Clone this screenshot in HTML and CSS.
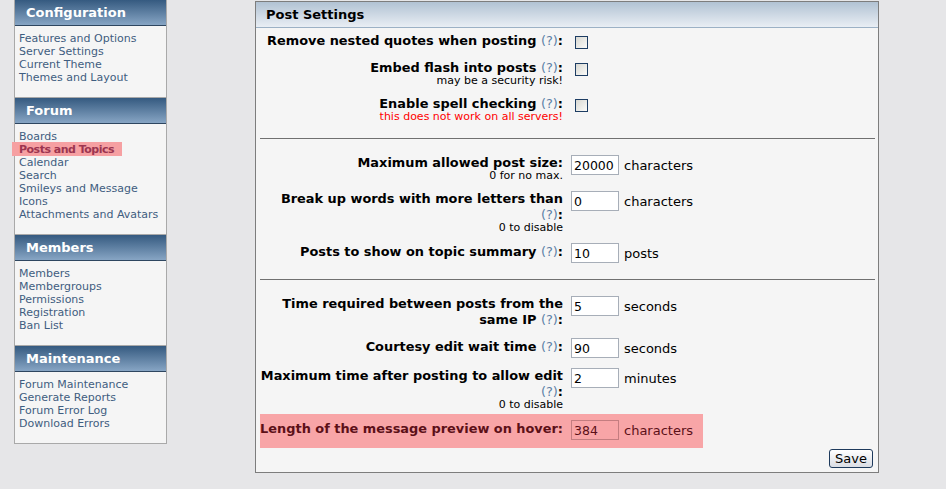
FILE: index.html
```html
<!DOCTYPE html>
<html lang="en">
<head>
<meta charset="utf-8">
<title>Post Settings</title>
<link rel="stylesheet" href="styles.css">
</head>
<body>
<div class="page">
  <nav class="nav">
    <section class="nav-section">
      <h3 class="nav-head">Configuration</h3>
      <ul class="nav-list">
        <li><a href="#">Features and Options</a></li>
        <li><a href="#">Server Settings</a></li>
        <li><a href="#">Current Theme</a></li>
        <li><a href="#">Themes and Layout</a></li>
      </ul>
    </section>
    <section class="nav-section">
      <h3 class="nav-head">Forum</h3>
      <ul class="nav-list">
        <li><a href="#">Boards</a></li>
        <li><a href="#" class="active">Posts and Topics</a></li>
        <li><a href="#">Calendar</a></li>
        <li><a href="#">Search</a></li>
        <li><a href="#">Smileys and Message</a></li>
        <li><a href="#">Icons</a></li>
        <li><a href="#">Attachments and Avatars</a></li>
      </ul>
    </section>
    <section class="nav-section">
      <h3 class="nav-head">Members</h3>
      <ul class="nav-list">
        <li><a href="#">Members</a></li>
        <li><a href="#">Membergroups</a></li>
        <li><a href="#">Permissions</a></li>
        <li><a href="#">Registration</a></li>
        <li><a href="#">Ban List</a></li>
      </ul>
    </section>
    <section class="nav-section">
      <h3 class="nav-head">Maintenance</h3>
      <ul class="nav-list">
        <li><a href="#">Forum Maintenance</a></li>
        <li><a href="#">Generate Reports</a></li>
        <li><a href="#">Forum Error Log</a></li>
        <li><a href="#">Download Errors</a></li>
      </ul>
    </section>
  </nav>

  <main class="panel">
    <h3 class="panel-head">Post Settings</h3>
    <form class="panel-body">
      <div class="row">
        <div class="label">Remove nested quotes when posting <a href="#" class="help">(?)</a>:</div>
        <div class="field"><input type="checkbox" class="check"></div>
      </div>
      <div class="row">
        <div class="label">Embed flash into posts <a href="#" class="help">(?)</a>:<span class="note">may be a security risk!</span></div>
        <div class="field"><input type="checkbox" class="check"></div>
      </div>
      <div class="row">
        <div class="label">Enable spell checking <a href="#" class="help">(?)</a>:<span class="note warn">this does not work on all servers!</span></div>
        <div class="field"><input type="checkbox" class="check"></div>
      </div>

      <hr class="sep">

      <div class="row">
        <div class="label">Maximum allowed post size:<span class="note">0 for no max.</span></div>
        <div class="field"><input type="text" class="num" value="20000"><span class="unit">characters</span></div>
      </div>
      <div class="row">
        <div class="label">Break up words with more letters than <a href="#" class="help">(?)</a>:<span class="note">0 to disable</span></div>
        <div class="field"><input type="text" class="num" value="0"><span class="unit">characters</span></div>
      </div>
      <div class="row single">
        <div class="label">Posts to show on topic summary <a href="#" class="help">(?)</a>:</div>
        <div class="field"><input type="text" class="num" value="10"><span class="unit">posts</span></div>
      </div>

      <hr class="sep">

      <div class="row">
        <div class="label">Time required between posts from the same IP <a href="#" class="help">(?)</a>:</div>
        <div class="field"><input type="text" class="num" value="5"><span class="unit">seconds</span></div>
      </div>
      <div class="row single">
        <div class="label">Courtesy edit wait time <a href="#" class="help">(?)</a>:</div>
        <div class="field"><input type="text" class="num" value="90"><span class="unit">seconds</span></div>
      </div>
      <div class="row">
        <div class="label">Maximum time after posting to allow edit <a href="#" class="help">(?)</a>:<span class="note">0 to disable</span></div>
        <div class="field"><input type="text" class="num" value="2"><span class="unit">minutes</span></div>
      </div>
      <div class="row single marked">
        <div class="label">Length of the message preview on hover:</div>
        <div class="field"><input type="text" class="num" value="384"><span class="unit">characters</span></div>
      </div>

      <div class="actions"><button type="button" class="save">Save</button></div>
    </form>
  </main>
</div>
</body>
</html>
```

FILE: styles.css
```css
* { box-sizing: border-box; }

html, body {
  margin: 0;
  padding: 0;
  background: #e6e6e8;
  font-family: "DejaVu Sans", Verdana, sans-serif;
  color: #000;
}

.page {
  display: flex;
  align-items: flex-start;
  gap: 88px;
  padding-left: 14px;
}

/* ---------- sidebar ---------- */
.nav {
  width: 153px;
  border: 1px solid #a9a9a9;
  border-top: 0;
  background: #f5f5f5;
}

.nav-section + .nav-section {
  border-top: 1px solid #a9a9a9;
}

.nav-head {
  margin: 0;
  height: 26px;
  padding-left: 11px;
  background: linear-gradient(#355a80, #87a5c4);
  border-bottom: 1px solid #2e4660;
  color: #fff;
  font-size: 13px;
  font-weight: bold;
  line-height: 25px;
}

.nav-list {
  list-style: none;
  margin: 0;
  padding: 6px 0 13px 4px;
  font-size: 11px;
  line-height: 13px;
}

.nav-list a {
  color: #3f5d80;
  text-decoration: none;
}

.nav-list a.active {
  display: inline-block;
  margin: -1px 0 0 -7px;
  padding: 1px 8px 0 7px;
  background: #f6a0a2;
  color: #9c3550;
  font-weight: bold;
  letter-spacing: -0.5px;
}

/* ---------- main panel ---------- */
.panel {
  width: 624px;
  margin-top: 1px;
  border: 1px solid #7d7d7d;
  background: #f5f5f5;
}

.panel-head {
  margin: 0;
  height: 26px;
  padding-left: 10px;
  background: linear-gradient(#b1c2d3, #e9eef4);
  border-bottom: 1px solid #9cb1c5;
  font-size: 13px;
  font-weight: bold;
  line-height: 25px;
}

.panel-body {
  margin: 0;
  padding: 5px 0 4px 4px;
}

.row {
  display: grid;
  grid-template-columns: 303px auto;
  column-gap: 8px;
  align-items: start;
  margin-bottom: 10px;
}

.label {
  text-align: right;
  font-size: 12.9px;
  font-weight: bold;
  line-height: 16px;
}

.row.single .label {
  padding-top: 1px;
}

.help {
  color: #5b7fa6;
  font-weight: normal;
  text-decoration: none;
}

.note {
  display: block;
  font-size: 11px;
  font-weight: normal;
  line-height: 10px;
}

.note.warn {
  color: #ff0000;
}

.field {
  display: flex;
  align-items: center;
  gap: 5px;
}

.check {
  appearance: none;
  -webkit-appearance: none;
  width: 13px;
  height: 13px;
  margin: 3px 0 1px 4px;
  border: 1px solid #1d3d63;
  border-radius: 0;
  background: linear-gradient(135deg, #d8d8d2, #fbfbf9);
}

.num {
  width: 48px;
  height: 20px;
  margin: 0;
  padding: 0 2px;
  border: 1px solid #a7aeb8;
  background: #fff;
  font-family: "DejaVu Sans", Verdana, sans-serif;
  font-size: 12.5px;
  color: #000;
}

.unit {
  font-size: 13px;
}

.sep {
  height: 1px;
  margin: 16px 3px 16px 0;
  border: 0;
  background: #707070;
}

.row.marked {
  width: fit-content;
  margin-top: -6px;
  margin-bottom: 0;
  padding: 6px 10px 8px 0;
  background: #f8a5a7;
  color: #5c1018;
}

.row.marked .num {
  background: transparent;
  border-color: #c47d80;
  color: #5c1018;
}

.actions {
  display: flex;
  justify-content: flex-end;
  margin-top: 1px;
  padding-right: 5px;
}

.save {
  height: 19px;
  padding: 0 5px;
  border: 1px solid #1e3a5c;
  border-radius: 3px;
  background: linear-gradient(#ffffff, #dadde4);
  font-family: "DejaVu Sans", Verdana, sans-serif;
  font-size: 13px;
  line-height: 16px;
  color: #000;
}
```
